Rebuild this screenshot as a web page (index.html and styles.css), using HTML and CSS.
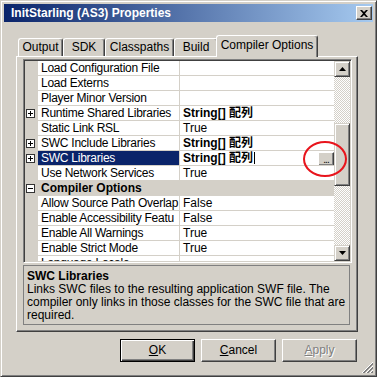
FILE: index.html
```html
<!DOCTYPE html>
<html lang="en">
<head>
    <meta charset="UTF-8">
    <title>InitStarling (AS3) Properties</title>
    <link rel="stylesheet" href="styles.css">
</head>
<body>
    <div class="window">
        <div class="titlebar">
            <span class="title">InitStarling (AS3) Properties</span>
            <span class="close-btn">
                <svg width="8" height="7" viewBox="0 0 8 7"><path d="M0 0h2l2 2 2-2h2L5 3.5 8 7H6L4 5 2 7H0l3-3.5z" fill="#000"/></svg>
            </span>
        </div>
        <div class="body">
            <div class="tabs">
                <div class="tab tab-output">Output</div>
                <div class="tab tab-sdk">SDK</div>
                <div class="tab tab-classpaths">Classpaths</div>
                <div class="tab tab-build">Build</div>
                <div class="tab tab-active">Compiler Options</div>
            </div>
            <div class="panel">
                <div class="grid">
                    <div class="rows">
                        <div class="row"><div class="gutter"></div><div class="name">Load Configuration File</div><div class="value"></div></div>
                        <div class="row"><div class="gutter"></div><div class="name">Load Externs</div><div class="value"></div></div>
                        <div class="row"><div class="gutter"></div><div class="name">Player Minor Version</div><div class="value"></div></div>
                        <div class="row">
                            <div class="gutter"><svg class="expander" width="9" height="9" viewBox="0 0 9 9"><rect x=".5" y=".5" width="8" height="8" fill="#fff" stroke="#333"/><path d="M2 4.5h5M4.5 2v5" stroke="#000"/></svg></div>
                            <div class="name">Runtime Shared Libraries</div>
                            <div class="value value-bold">String[] 配列</div>
                        </div>
                        <div class="row"><div class="gutter"></div><div class="name">Static Link RSL</div><div class="value">True</div></div>
                        <div class="row">
                            <div class="gutter"><svg class="expander" width="9" height="9" viewBox="0 0 9 9"><rect x=".5" y=".5" width="8" height="8" fill="#fff" stroke="#333"/><path d="M2 4.5h5M4.5 2v5" stroke="#000"/></svg></div>
                            <div class="name">SWC Include Libraries</div>
                            <div class="value value-bold">String[] 配列</div>
                        </div>
                        <div class="row row-selected">
                            <div class="gutter"><svg class="expander" width="9" height="9" viewBox="0 0 9 9"><rect x=".5" y=".5" width="8" height="8" fill="#fff" stroke="#333"/><path d="M2 4.5h5M4.5 2v5" stroke="#000"/></svg></div>
                            <div class="name">SWC Libraries</div>
                            <div class="value value-bold">String[] 配列<span class="caret"></span><span class="dots-btn">...</span></div>
                        </div>
                        <div class="row"><div class="gutter"></div><div class="name">Use Network Services</div><div class="value">True</div></div>
                        <div class="row row-category">
                            <div class="gutter"><svg class="expander" width="9" height="9" viewBox="0 0 9 9"><rect x=".5" y=".5" width="8" height="8" fill="#fff" stroke="#333"/><path d="M2 4.5h5" stroke="#000"/></svg></div>
                            <div class="category-name">Compiler Options</div>
                        </div>
                        <div class="row"><div class="gutter"></div><div class="name">Allow Source Path Overlap</div><div class="value">False</div></div>
                        <div class="row"><div class="gutter"></div><div class="name">Enable Accessibility Featu</div><div class="value">False</div></div>
                        <div class="row"><div class="gutter"></div><div class="name">Enable All Warnings</div><div class="value">True</div></div>
                        <div class="row"><div class="gutter"></div><div class="name">Enable Strict Mode</div><div class="value">True</div></div>
                        <div class="row"><div class="gutter"></div><div class="name">Language Locale</div><div class="value"></div></div>
                    </div>
                    <div class="scrollbar">
                        <div class="sb-btn"><svg width="7" height="4" viewBox="0 0 7 4"><path d="M3.5 0L7 4H0z" fill="#000"/></svg></div>
                        <div class="sb-track sb-track-top"></div>
                        <div class="sb-thumb"></div>
                        <div class="sb-track sb-track-bottom"></div>
                        <div class="sb-btn"><svg width="7" height="4" viewBox="0 0 7 4"><path d="M0 0h7L3.5 4z" fill="#000"/></svg></div>
                    </div>
                </div>
                <div class="help">
                    <div class="help-title">SWC Libraries</div>
                    <div class="help-text">Links SWC files to the resulting application SWF file. The<br>compiler only links in those classes for the SWC file that are<br>required.</div>
                </div>
            </div>
            <div class="buttons">
                <div class="btn btn-default"><u>O</u>K</div>
                <div class="btn"><u>C</u>ancel</div>
                <div class="btn btn-disabled"><u>A</u>pply</div>
            </div>
        </div>
        <svg class="grip" width="12" height="12" viewBox="0 0 12 12">
            <path d="M11 1L1 11M11 5L5 11M11 9L9 11" stroke="#808080" stroke-width="1"/>
            <path d="M11 2L2 11M11 6L6 11M11 10L10 11" stroke="#808080" stroke-width="1"/>
            <path d="M11 0L0 11M11 4L4 11M11 8L8 11" stroke="#fff" stroke-width="1"/>
        </svg>
        <div class="highlight"></div>
    </div>
</body>
</html>
```
FILE: styles.css
```css
* {
    margin: 0;
    padding: 0;
}
body {
    background: #fff;
    font: 12px "Liberation Sans", Arial, "Noto Sans CJK JP", sans-serif;
    color: #000;
}
.window {
    position: relative;
    width: 377px;
    height: 377px;
    box-sizing: border-box;
    background: #d4d0c8;
    border: 1px solid;
    border-color: #d4d0c8 #404040 #404040 #d4d0c8;
    box-shadow: inset 1px 1px #fff, inset -1px -1px #808080;
    padding: 3px;
}
.titlebar {
    height: 18px;
    display: flex;
    align-items: center;
    justify-content: space-between;
    background: linear-gradient(to right, #0a246a, #a6caf0);
    color: #fff;
    font-weight: bold;
    padding: 0 1px 0 7px;
}
.close-btn {
    width: 16px;
    height: 14px;
    box-sizing: border-box;
    display: flex;
    align-items: center;
    justify-content: center;
    background: #d4d0c8;
    border: 1px solid;
    border-color: #fff #404040 #404040 #fff;
    box-shadow: inset -1px -1px #808080;
}
.body {
    padding: 13px 0 0 12px;
}
.tabs {
    display: flex;
    align-items: flex-end;
    height: 21px;
    margin-left: 2px;
    position: relative;
    z-index: 1;
}
.tab {
    height: 18px;
    box-sizing: border-box;
    border: 1px solid;
    border-bottom: none;
    border-color: #fff #404040 #fff #fff;
    box-shadow: inset -1px 0 #808080;
    border-radius: 3px 3px 0 0;
    background: #d4d0c8;
    text-align: center;
    line-height: 16px;
}
.tab-output { width: 45px; }
.tab-sdk { width: 42px; }
.tab-classpaths { width: 69px; }
.tab-build { width: 44px; }
.tab-active {
    width: 102px;
    height: 22px;
    margin: 0 -2px -1px -2px;
    padding-top: 2px;
    line-height: 14px;
    position: relative;
}
.panel {
    width: 342px;
    height: 276px;
    box-sizing: border-box;
    border: 1px solid;
    border-color: #fff #404040 #404040 #fff;
    box-shadow: inset -1px -1px #808080;
    padding: 2px 0 0 6px;
}
.grid {
    display: flex;
    width: 329px;
    height: 204px;
    box-sizing: border-box;
    border: 1px solid;
    border-color: #808080 #fff #fff #808080;
    box-shadow: inset 1px 1px #404040, inset -1px -1px #d4d0c8;
    padding: 1px;
}
.rows {
    flex: 1;
    overflow: hidden;
    background: #fff;
}
.row {
    display: flex;
    height: 15px;
    line-height: 14px;
    white-space: nowrap;
}
.gutter {
    width: 13px;
    flex: none;
    background: #d4d0c8;
    padding: 3px 0 0 1px;
    box-sizing: border-box;
}
.expander {
    display: block;
}
.name {
    width: 142px;
    flex: none;
    box-sizing: border-box;
    padding-left: 3px;
    overflow: hidden;
    letter-spacing: -0.25px;
    border-right: 1px solid #d4d0c8;
    border-bottom: 1px solid #d4d0c8;
}
.value {
    width: 154px;
    flex: none;
    box-sizing: border-box;
    padding-left: 3px;
    overflow: hidden;
    border-bottom: 1px solid #d4d0c8;
    display: flex;
    align-items: center;
}
.value-bold {
    font-weight: bold;
}
.row-selected .name {
    background: #0a246a;
    color: #fff;
}
.caret {
    width: 1px;
    height: 12px;
    background: #000;
    margin-left: 1px;
}
.dots-btn {
    margin-left: auto;
    width: 16px;
    height: 14px;
    box-sizing: border-box;
    align-self: flex-start;
    margin-top: 1px;
    background: #d4d0c8;
    border: 1px solid;
    border-color: #fff #404040 #404040 #fff;
    box-shadow: inset -1px -1px #808080;
    font-weight: normal;
    font-size: 10px;
    line-height: 14px;
    text-align: center;
    letter-spacing: -1px;
}
.row-category {
    background: #d4d0c8;
}
.category-name {
    flex: 1;
    padding-left: 3px;
    font-weight: bold;
}
.scrollbar {
    width: 16px;
    display: flex;
    flex-direction: column;
}
.sb-btn,
.sb-thumb {
    box-sizing: border-box;
    background: #d4d0c8;
    border: 1px solid;
    border-color: #d4d0c8 #404040 #404040 #d4d0c8;
    box-shadow: inset 1px 1px #fff, inset -1px -1px #808080;
}
.sb-btn {
    height: 16px;
    display: flex;
    align-items: center;
    justify-content: center;
}
.sb-btn svg {
    display: block;
}
.sb-track {
    background: repeating-conic-gradient(#d4d0c8 0 25%, #fff 0 50%) 0 0 / 2px 2px;
}
.sb-track-top { height: 46px; }
.sb-thumb { height: 63px; }
.sb-track-bottom { height: 59px; }
.help {
    margin-top: 2px;
    width: 327px;
    height: 60px;
    box-sizing: border-box;
    border: 1px solid #808080;
    padding: 3px 3px 0;
    white-space: nowrap;
}
.help-title {
    font-weight: bold;
    line-height: 14px;
}
.help-text {
    line-height: 13px;
}
.buttons {
    display: flex;
    justify-content: flex-end;
    gap: 6px;
    width: 341px;
    margin-top: 7px;
}
.btn {
    width: 75px;
    height: 23px;
    box-sizing: border-box;
    border: 1px solid;
    border-color: #fff #404040 #404040 #fff;
    box-shadow: inset -1px -1px #808080;
    text-align: center;
    line-height: 20px;
}
.btn-default {
    border-color: #000;
    box-shadow: inset 1px 1px #fff, inset -1px -1px #404040, inset -2px -2px #808080;
}
.btn-disabled {
    color: #808080;
    text-shadow: 1px 1px #fff;
}
.grip {
    position: absolute;
    right: 2px;
    bottom: 2px;
}
.highlight {
    position: absolute;
    left: 302px;
    top: 140px;
    width: 44px;
    height: 36px;
    box-sizing: border-box;
    border: 2px solid #e8141c;
    border-radius: 50%;
}
```
